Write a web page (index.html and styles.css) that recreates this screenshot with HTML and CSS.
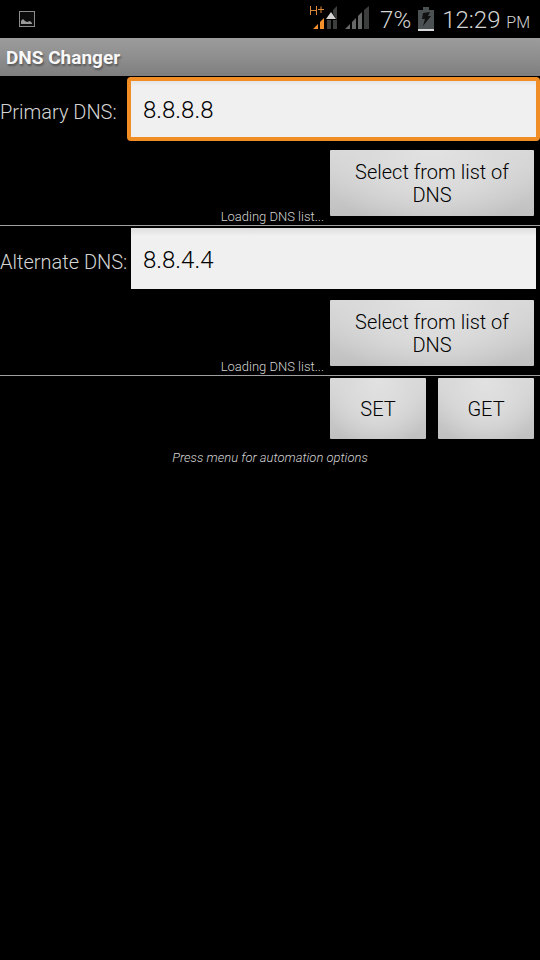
FILE: index.html
```html
<!DOCTYPE html>
<html lang="en">
<head>
<meta charset="utf-8">
<meta name="viewport" content="width=device-width, initial-scale=1">
<title>DNS Changer</title>
<link rel="stylesheet" href="styles.css">
</head>
<body>
<div class="status">
  <svg class="status-picture" width="16" height="16" viewBox="0 0 16 16" aria-hidden="true">
    <rect x=".5" y=".5" width="15" height="15" fill="#0c0c0c" stroke="#8c8c8c"/>
    <path d="M2 13V10L4 8L6 10L8 11L11 10L13 12V13Z" fill="#999"/>
  </svg>
  <svg class="status-signal" width="60" height="26" viewBox="0 0 60 26" aria-hidden="true">
    <path d="M1.500 0V9M7.500 0V9M1.500 4.500H7.500M9 3.500H15M12 0.500V7" fill="none" stroke="#dc8838"/>
    <path d="M4 23L9 18V23ZM11 16L15 12V23H11Z" fill="#f5922c"/>
    <path d="M18 14H22V23H18ZM24 4L28 0V23H24Z" fill="#3c3e3e"/>
    <path d="M16 14L22 4L28 14Z" fill="#000"/>
    <path d="M17 13L22 6L27 13Z" fill="#d2d2d2"/>
    <path d="M36 23L41 18V23ZM43 16L47 12V23H43ZM49 10L53 6V23H49Z" fill="#666868"/>
    <path d="M55 4L60 0V23H55Z" fill="#3c3e3e"/>
  </svg>
  <span class="status-percent">7%</span>
  <svg class="status-battery" width="16" height="24" viewBox="0 0 16 24" aria-hidden="true">
    <path d="M5 0H11V3H16V24H0V3H5Z" fill="#4b5052"/>
    <path d="M5 6L12 5L10 9H13L5 19L7 12H4Z" fill="#111"/>
    <path d="M0 22H16V24H0Z" fill="#d8d8d8"/>
  </svg>
  <time class="status-time">12:29 <span class="status-meridiem">PM</span></time>
</div>
<h1 class="title">DNS Changer</h1>
<main>
  <section class="entry">
    <div class="entry-field">
      <label class="entry-label" for="primary">Primary DNS:</label>
      <input class="entry-input entry-input-active" id="primary" type="text" value="8.8.8.8">
    </div>
    <div class="entry-actions">
      <span class="entry-loading">Loading DNS list...</span>
      <button class="button button-list" type="button">Select from list of DNS</button>
    </div>
  </section>
  <section class="entry">
    <div class="entry-field">
      <label class="entry-label" for="alternate">Alternate DNS:</label>
      <input class="entry-input" id="alternate" type="text" value="8.8.4.4">
    </div>
    <div class="entry-actions">
      <span class="entry-loading">Loading DNS list...</span>
      <button class="button button-list" type="button">Select from list of DNS</button>
    </div>
  </section>
  <div class="commands">
    <button class="button button-command" type="button">SET</button>
    <button class="button button-command" type="button">GET</button>
  </div>
  <p class="hint">Press menu for automation options</p>
</main>
</body>
</html>
```
FILE: styles.css
```css
* {
  box-sizing: border-box;
}

body {
  margin: 0;
  background: #000;
  color: #d4d4d4;
  font-family: Roboto, "Liberation Sans", sans-serif;
  font-size: 20px;
  font-weight: 350;
}

.status {
  display: flex;
  align-items: center;
  height: 38px;
  padding: 0 10px 0 19px;
}

.status-signal {
  margin: 0 11px 0 auto;
}

.status-percent {
  padding-top: 2px;
  font-size: 24px;
}

.status-battery {
  margin: 0 8px 0 7px;
}

.status-time {
  padding-top: 2px;
  font-size: 24px;
}

.status-meridiem {
  font-size: 16px;
}

.title {
  height: 38px;
  margin: 0;
  padding: 0 6px;
  background: linear-gradient(#9c9c9c, #8d8d8d 55%, #7e7e7e);
  color: #f8f8f8;
  font-size: 19px;
  font-weight: 700;
  line-height: 40px;
  text-shadow: 1px 2px 2px #555;
}

.entry {
  padding-top: 2px;
  border-bottom: 1px solid #a0a0a0;
}

.entry-field {
  display: grid;
  grid-template-columns: 127px 1fr;
  align-items: center;
  padding-right: 4px;
}

.entry-label {
  white-space: nowrap;
  padding-top: 6px;
}

.entry-input {
  min-width: 0;
  height: 61px;
  margin-left: 4px;
  padding: 2px 12px 0;
  border: 0;
  border-radius: 0;
  outline: 0;
  background: linear-gradient(#dedede, #f0f0f0 8px);
  color: #000;
  font: inherit;
  font-size: 24px;
}

.entry-input-active {
  box-shadow: inset 0 3px #f08d24, inset 0 -2px #f08d24, 0 0 0 1px #f08d24, 0 0 0 4px #f08d24;
  clip-path: inset(-1px -4px -2px -4px round 4px);
}

.entry-actions {
  display: flex;
  justify-content: flex-end;
  align-items: flex-end;
  gap: 6px;
  padding: 11px 6px 0 0;
}

.entry-loading {
  font-size: 13px;
  line-height: 17px;
}

.button {
  padding: 2px 16px 0;
  border: 0;
  border-radius: 1px;
  background: radial-gradient(ellipse at top, #e2e2e2, #dadada 45%, transparent 85%), linear-gradient(#d8d8d8, #c0c0c0);
  color: #000;
  font: inherit;
  line-height: 23px;
}

.button-list {
  width: 204px;
  height: 66px;
  margin-bottom: 9px;
}

.commands {
  display: flex;
  justify-content: flex-end;
  gap: 12px;
  padding: 2px 6px 0 0;
}

.button-command {
  width: 96px;
  height: 61px;
}

.hint {
  margin: 10px 0;
  font-size: 13px;
  font-style: italic;
  line-height: 17px;
  text-align: center;
}
```
